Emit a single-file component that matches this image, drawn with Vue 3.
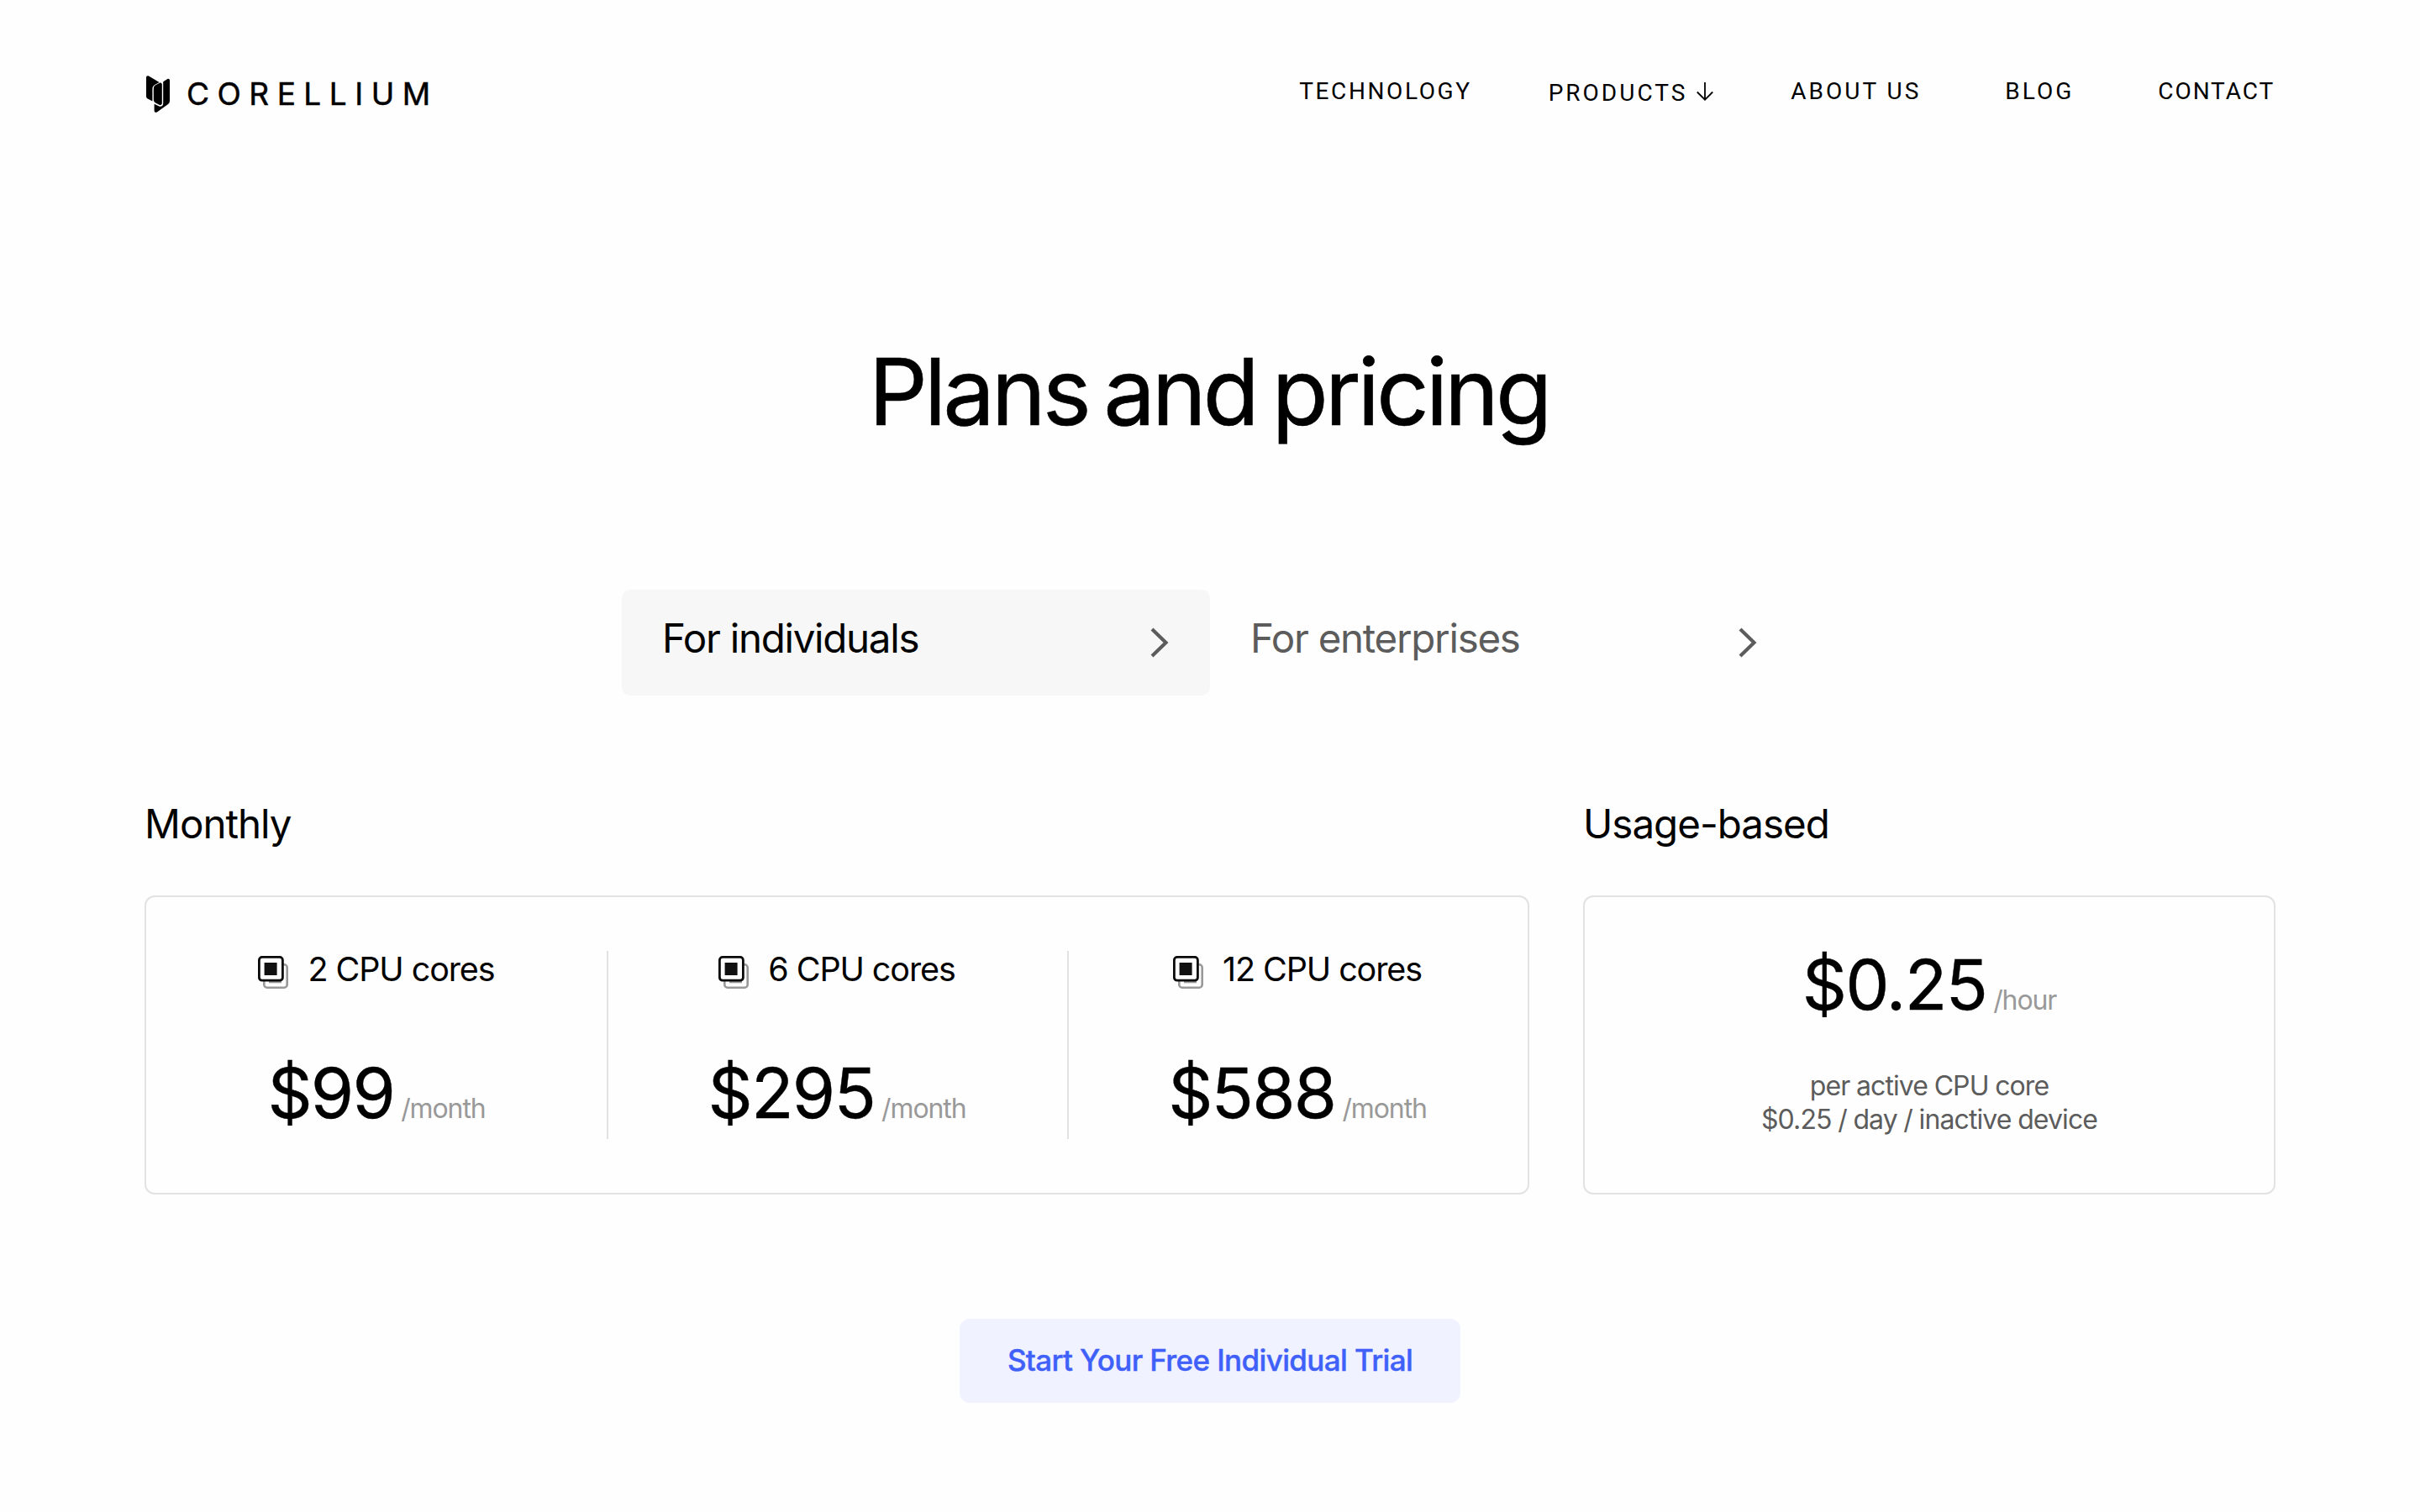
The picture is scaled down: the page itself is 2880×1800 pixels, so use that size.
<template>
  <div class="page">
    <header class="header">
      <a class="logo">
        <svg class="logo-mark" viewBox="0 0 28 44" width="28" height="44">
          <path d="M0 2.4C0 .6 1.4-.4 3 .5L15.6 8 11 10.400C8.600 11.700 7.400 13.200 7.400 15.600V30.600L1.800 27.400C.6 26.700 0 25.700 0 24.400Z" />
          <path d="M20.200 7.200 25 4.200C26.600 3.200 28 4 28 5.800V29.400C28 31.600 27.200 33.200 25.400 34.400L13.200 43.200C11.200 44.500 9.600 43.600 9.600 41.400V33.800L14.800 36.300C18 37.700 20.200 36 20.200 33Z" />
          <path d="M8.800 15.600C8.800 13.400 9.800 12.200 11.600 11.100L15.500 8.900C17.500 7.900 18.800 8.700 18.800 11V32.600C18.800 34.800 17.500 35.600 15.500 34.700L11.600 32.700C9.800 31.700 8.800 30.400 8.800 28.400Z" />
        </svg>
        <span class="logo-text">CORELLIUM</span>
      </a>
      <nav class="nav">
        <a v-for="link in links" :key="link.label" :class="['nav-link', { dropdown: link.dropdown }]">
          {{ link.label }}
          <svg v-if="link.dropdown" class="nav-arrow" viewBox="0 0 20 22" width="20" height="22">
            <path d="M10 0V20.500M.8 11.500 10 20.700 19.200 11.500" />
          </svg>
        </a>
      </nav>
    </header>

    <h1 class="title">Plans and pricing</h1>

    <div class="tabs">
      <button
        v-for="tab in tabs"
        :key="tab.id"
        :class="['tab', { active: activeTab === tab.id }]"
        @click="activeTab = tab.id"
      >
        <span>{{ tab.label }}</span>
        <svg class="chevron" viewBox="0 0 22 36" width="22" height="36">
          <path d="M2 2 18.500 18 2 34" />
        </svg>
      </button>
    </div>

    <main class="plans">
      <section class="monthly">
        <h2 class="plans-heading">Monthly</h2>
        <div class="card">
          <div v-for="plan in plans" :key="plan.price" class="plan">
            <div class="cores">
              <svg class="cpu" viewBox="0 0 36 40" width="36" height="40">
                <rect class="cpu-back" x="7.300" y="10.300" width="27.400" height="27.400" rx="3.500" />
                <path class="cpu-back" d="M13 31H28" />
                <rect class="cpu-front" x="1.400" y="1.400" width="28" height="27.800" rx="3.500" />
                <rect class="cpu-core" x="7.600" y="8" width="15" height="15" />
              </svg>
              <span class="cores-label">{{ plan.cores }} CPU cores</span>
            </div>
            <div class="price">
              <span class="amount">{{ plan.price }}</span>
              <span class="period">/month</span>
            </div>
          </div>
        </div>
      </section>

      <section class="usage">
        <h2 class="plans-heading">Usage-based</h2>
        <div class="card usage-card">
          <div class="price">
            <span class="amount">$0.25</span>
            <span class="period">/hour</span>
          </div>
          <p class="note">per active CPU core<br />$0.25 / day / inactive device</p>
        </div>
      </section>
    </main>

    <button class="trial-btn">Start Your Free Individual Trial</button>
  </div>
</template>

<script setup>
import { ref } from 'vue'

const activeTab = ref('individuals')

const links = [
  { label: 'TECHNOLOGY' },
  { label: 'PRODUCTS', dropdown: true },
  { label: 'ABOUT US' },
  { label: 'BLOG' },
  { label: 'CONTACT' },
]

const tabs = [
  { id: 'individuals', label: 'For individuals' },
  { id: 'enterprises', label: 'For enterprises' },
]

const plans = [
  { cores: 2, price: '$99' },
  { cores: 6, price: '$295' },
  { cores: 12, price: '$588' },
]
</script>

<style>
body {
  background: #fefefe;
}
</style>

<style scoped>
.page {
  box-sizing: border-box;
  height: 1800px;
  padding: 84px 172px 0;
  display: flex;
  flex-direction: column;
  align-items: center;
  background: #fefefe;
  color: #000;
  font-family: Inter, "Liberation Sans", sans-serif;
}
.header {
  width: 100%;
  height: 56px;
  display: flex;
  align-items: center;
  justify-content: space-between;
}
.logo {
  display: flex;
  align-items: center;
  gap: 20px;
  padding-left: 2px;
}
.logo-mark {
  display: block;
}
.logo-text {
  font-size: 37px;
  line-height: 44px;
  letter-spacing: 9.5px;
  -webkit-text-stroke: 0.5px #000;
}
.nav {
  display: flex;
  align-items: center;
  gap: 100px;
  padding-right: 1px;
  font-family: Roboto, sans-serif;
  font-size: 28px;
  line-height: 40px;
  letter-spacing: 3px;
}
.nav-link {
  display: flex;
  align-items: center;
  margin-top: -6px;
}
.nav-link:first-child {
  letter-spacing: 2.6px;
}
.nav-link:last-child {
  letter-spacing: 1.9px;
}
.nav-link.dropdown {
  margin: -2px -8px 0 -9px;
}
.nav-arrow {
  margin: -5px 0 0 11px;
  fill: none;
  stroke: #000;
  stroke-width: 1.8;
}
.title {
  margin: 256px 0 0;
  padding-right: 3px;
  font-size: 110px;
  line-height: 140px;
  font-weight: 400;
  letter-spacing: -4.2px;
  word-spacing: -8px;
  -webkit-text-stroke: 0.6px #000;
}
.tabs {
  display: flex;
  width: 1400px;
  margin-top: 166px;
}
.tab {
  flex: 1;
  height: 126px;
  display: flex;
  align-items: center;
  justify-content: space-between;
  padding: 0 49px 12px 48px;
  border: none;
  border-radius: 10px;
  background: none;
  color: #5c5c5c;
  font-family: inherit;
  font-size: 47.5px;
  letter-spacing: -1.3px;
  cursor: pointer;
}
.tab.active {
  background: #f7f7f7;
}
.tab.active span {
  color: #000;
}
.chevron {
  margin-top: 12px;
  fill: none;
  stroke: #5c5c5c;
  stroke-width: 4.2;
}
.plans {
  width: 100%;
  display: flex;
  gap: 64px;
  margin-top: 121px;
}
.monthly {
  width: 1648px;
}
.usage {
  flex: 1;
}
.plans-heading {
  margin: 0 0 53px;
  font-size: 47.5px;
  line-height: 64px;
  font-weight: 400;
  letter-spacing: -1px;
}
.card {
  box-sizing: border-box;
  height: 356px;
  display: flex;
  padding: 64px 0;
  border: 2px solid #e2e2e2;
  border-radius: 12px;
}
.plan {
  flex: 1;
  display: flex;
  flex-direction: column;
  align-items: center;
}
.plan + .plan {
  box-shadow: inset 2px 0 #e2e2e2;
}
.cores {
  display: flex;
  align-items: center;
  gap: 23px;
  height: 48px;
  font-size: 39.5px;
  letter-spacing: -1.1px;
}
.cores-label {
  margin-top: -2px;
}
.cpu {
  margin-top: 5px;
}
.cpu-back {
  fill: none;
  stroke: #999;
  stroke-width: 2.6;
}
.cpu-front {
  fill: #fefefe;
  stroke: #0a0a0a;
  stroke-width: 2.8;
}
.cpu-core {
  fill: #111;
}
.price {
  display: flex;
  align-items: baseline;
  gap: 8px;
  line-height: 100px;
}
.plan .price {
  margin-top: 73px;
}
.amount {
  font-size: 83px;
  letter-spacing: -1.8px;
  -webkit-text-stroke: 0.4px #000;
}
.period {
  color: #999;
  font-size: 32px;
  letter-spacing: -1.1px;
}
.usage-card {
  flex-direction: column;
  align-items: center;
}
.usage-card .price {
  margin-top: -10px;
}
.note {
  margin: 32px 0 0;
  color: #5c5c5c;
  font-size: 32px;
  line-height: 40px;
  letter-spacing: -0.9px;
  word-spacing: -0.5px;
  text-align: center;
}
.trial-btn {
  width: 596px;
  height: 100px;
  margin-top: 148px;
  padding: 0 0 2px;
  border: none;
  border-radius: 12px;
  background: #f0f2ff;
  color: #4060fa;
  font-family: inherit;
  font-size: 35px;
  font-weight: 500;
  letter-spacing: -0.63px;
  -webkit-text-stroke: 0.4px #4060fa;
  cursor: pointer;
}
</style>
